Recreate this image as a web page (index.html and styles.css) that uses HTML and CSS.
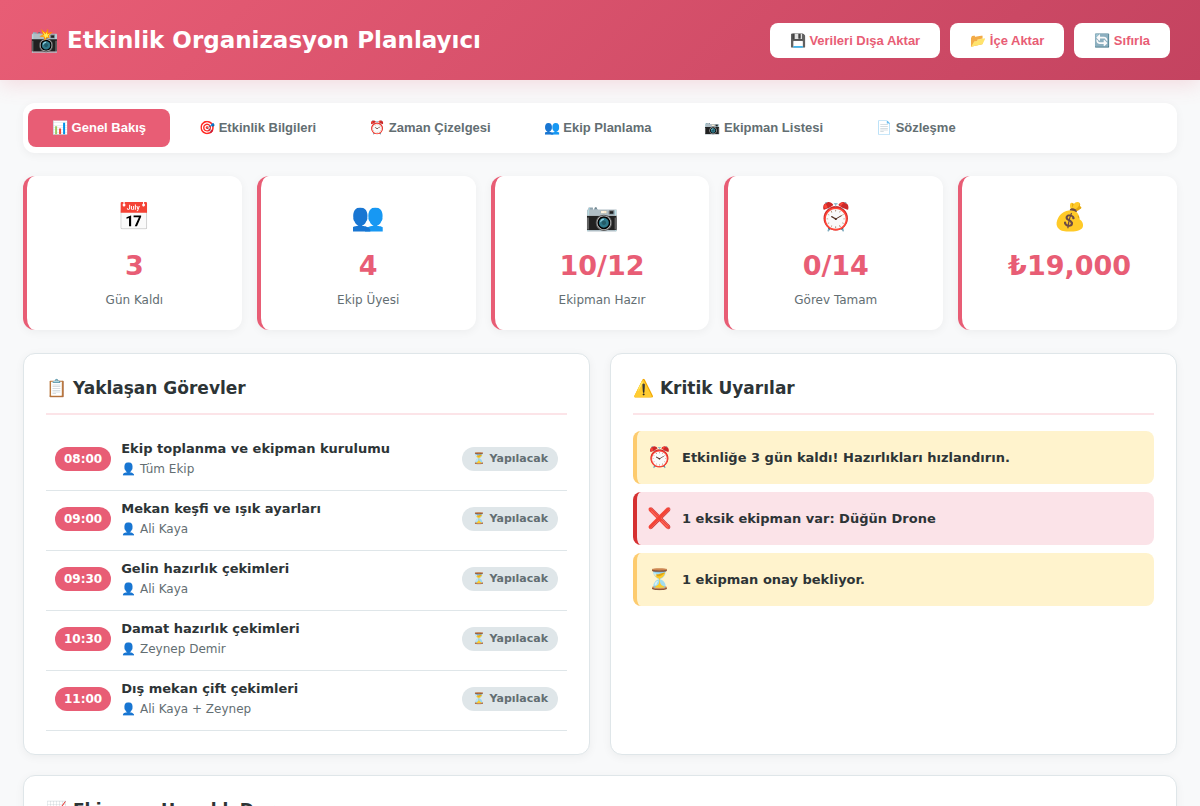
FILE: index.html
```html
<!DOCTYPE html>
<html lang="tr">
<head>
  <meta charset="UTF-8">
  <meta name="viewport" content="width=device-width, initial-scale=1.0">
  <title>Etkinlik Organizasyon Planlayıcı</title>
  <link rel="stylesheet" href="styles.css">
</head>
<body>
  <header class="header">
    <h1>📸 Etkinlik Organizasyon Planlayıcı</h1>
    <div class="header-actions">
      <button class="btn" type="button">💾 Verileri Dışa Aktar</button>
      <button class="btn" type="button">📂 İçe Aktar</button>
      <button class="btn" type="button">🔄 Sıfırla</button>
    </div>
  </header>

  <main class="container">
    <nav class="tabs">
      <button class="tab active" type="button">📊 Genel Bakış</button>
      <button class="tab" type="button">🎯 Etkinlik Bilgileri</button>
      <button class="tab" type="button">⏰ Zaman Çizelgesi</button>
      <button class="tab" type="button">👥 Ekip Planlama</button>
      <button class="tab" type="button">📷 Ekipman Listesi</button>
      <button class="tab" type="button">📄 Sözleşme</button>
    </nav>

    <!-- Özet kartları -->
    <section class="stats">
      <div class="stat-card">
        <div class="stat-icon">📅</div>
        <div class="stat-value">3</div>
        <div class="stat-label">Gün Kaldı</div>
      </div>
      <div class="stat-card">
        <div class="stat-icon">👥</div>
        <div class="stat-value">4</div>
        <div class="stat-label">Ekip Üyesi</div>
      </div>
      <div class="stat-card">
        <div class="stat-icon">📷</div>
        <div class="stat-value">10/12</div>
        <div class="stat-label">Ekipman Hazır</div>
      </div>
      <div class="stat-card">
        <div class="stat-icon">⏰</div>
        <div class="stat-value">0/14</div>
        <div class="stat-label">Görev Tamam</div>
      </div>
      <div class="stat-card">
        <div class="stat-icon">💰</div>
        <div class="stat-value">₺19,000</div>
      </div>
    </section>

    <div class="grid-2">
      <section class="card">
        <h2>📋 Yaklaşan Görevler</h2>
        <ul class="tasks">
          <li class="task">
            <span class="task-time">08:00</span>
            <div class="task-info">
              <strong>Ekip toplanma ve ekipman kurulumu</strong>
              <small>👤 Tüm Ekip</small>
            </div>
            <span class="status">⏳ Yapılacak</span>
          </li>
          <li class="task">
            <span class="task-time">09:00</span>
            <div class="task-info">
              <strong>Mekan keşfi ve ışık ayarları</strong>
              <small>👤 Ali Kaya</small>
            </div>
            <span class="status">⏳ Yapılacak</span>
          </li>
          <li class="task">
            <span class="task-time">09:30</span>
            <div class="task-info">
              <strong>Gelin hazırlık çekimleri</strong>
              <small>👤 Ali Kaya</small>
            </div>
            <span class="status">⏳ Yapılacak</span>
          </li>
          <li class="task">
            <span class="task-time">10:30</span>
            <div class="task-info">
              <strong>Damat hazırlık çekimleri</strong>
              <small>👤 Zeynep Demir</small>
            </div>
            <span class="status">⏳ Yapılacak</span>
          </li>
          <li class="task">
            <span class="task-time">11:00</span>
            <div class="task-info">
              <strong>Dış mekan çift çekimleri</strong>
              <small>👤 Ali Kaya + Zeynep</small>
            </div>
            <span class="status">⏳ Yapılacak</span>
          </li>
        </ul>
      </section>

      <section class="card">
        <h2>⚠️ Kritik Uyarılar</h2>
        <div class="alert warning">
          <span class="alert-icon">⏰</span>
          <span>Etkinliğe 3 gün kaldı! Hazırlıkları hızlandırın.</span>
        </div>
        <div class="alert danger">
          <span class="alert-icon">❌</span>
          <span>1 eksik ekipman var: Düğün Drone</span>
        </div>
        <div class="alert warning">
          <span class="alert-icon">⏳</span>
          <span>1 ekipman onay bekliyor.</span>
        </div>
      </section>
    </div>

    <section class="card">
      <h2>📈 Ekipman Hazırlık Durumu</h2>
    </section>
  </main>
</body>
</html>
```

FILE: styles.css
```css
:root {
  --primary: #e85d75;
  --primary-dark: #c44360;
  --text: #2d3436;
  --muted: #636e72;
  --border: #dfe6e9;
}

* {
  margin: 0;
  padding: 0;
  box-sizing: border-box;
}

body {
  background: #f8f9fa;
  color: var(--text);
  font-family: "DejaVu Sans", sans-serif;
  font-size: 15px;
  line-height: 24px;
}

.header {
  display: flex;
  justify-content: space-between;
  align-items: center;
  padding: 22px 30px;
  background: linear-gradient(135deg, var(--primary), var(--primary-dark));
  box-shadow: 0 4px 20px rgba(232, 93, 117, 0.2);
  color: white;
}

h1 {
  font-size: 23px;
  line-height: 36px;
}

.header-actions {
  display: flex;
  gap: 10px;
}

.btn,
.tab {
  border: none;
  border-radius: 8px;
  font-family: "Liberation Sans", sans-serif;
  font-size: 13px;
  font-weight: bold;
  cursor: pointer;
}

.btn {
  padding: 10px 20px;
  background: white;
  color: var(--primary);
}

.container {
  padding: 23px;
}

.tabs {
  display: flex;
  gap: 5px;
  margin-bottom: 23px;
  padding: 6px 5px;
  background: white;
  border-radius: 12px;
  box-shadow: 0 2px 10px rgba(0, 0, 0, 0.05);
}

.tab {
  padding: 11px 24px;
  background: transparent;
  color: var(--muted);
  line-height: 16px;
}

.tab.active {
  background: var(--primary);
  color: white;
}

.stats {
  display: grid;
  grid-template-columns: repeat(5, 1fr);
  gap: 15px;
  margin-bottom: 23px;
}

.stat-card {
  padding: 20px;
  background: white;
  border-left: 4px solid var(--primary);
  border-radius: 12px;
  box-shadow: 0 2px 10px rgba(0, 0, 0, 0.05);
  text-align: center;
}

.stat-icon {
  font-size: 27px;
  line-height: 42px;
}

.stat-value {
  margin: 6px 0 3px;
  color: var(--primary);
  font-size: 27px;
  font-weight: bold;
  line-height: 44px;
}

.stat-label {
  color: var(--muted);
  font-size: 12px;
  line-height: 19px;
}

.grid-2 {
  display: grid;
  grid-template-columns: 1fr 1fr;
  gap: 20px;
  margin-bottom: 20px;
}

.card {
  padding: 22px 22px 23px;
  background: white;
  border: 1px solid var(--border);
  border-radius: 12px;
  box-shadow: 0 2px 10px rgba(0, 0, 0, 0.05);
}

h2 {
  margin-bottom: 16px;
  padding-bottom: 13px;
  border-bottom: 2px solid #fce4e8;
  font-size: 17px;
  line-height: 24px;
}

.tasks {
  list-style: none;
}

.task {
  display: flex;
  align-items: center;
  gap: 10px;
  padding: 8px 9px 11px;
  border-bottom: 1px solid var(--border);
}

.task-time {
  padding: 2px 9px;
  background: var(--primary);
  border-radius: 20px;
  color: white;
  font-size: 12px;
  font-weight: bold;
  line-height: 20px;
}

.task-info {
  flex: 1;
}

.task-info strong,
.task-info small {
  display: block;
  line-height: 20px;
}

.task-info strong {
  font-size: 13px;
}

.task-info small {
  color: var(--muted);
  font-size: 12px;
}

.status {
  padding: 2px 10px;
  background: var(--border);
  border-radius: 20px;
  color: var(--muted);
  font-size: 11px;
  font-weight: bold;
  line-height: 20px;
}

.alert {
  display: flex;
  align-items: center;
  gap: 10px;
  margin-bottom: 8px;
  padding: 9px 10px;
  border-left: 4px solid;
  border-radius: 8px;
  font-size: 13px;
  font-weight: bold;
}

.alert-icon {
  font-size: 20px;
  line-height: 35px;
}

.warning {
  background: #fff3cd;
  border-color: #fdcb6e;
}

.danger {
  background: #fbe3e8;
  border-color: #d63031;
}
```
